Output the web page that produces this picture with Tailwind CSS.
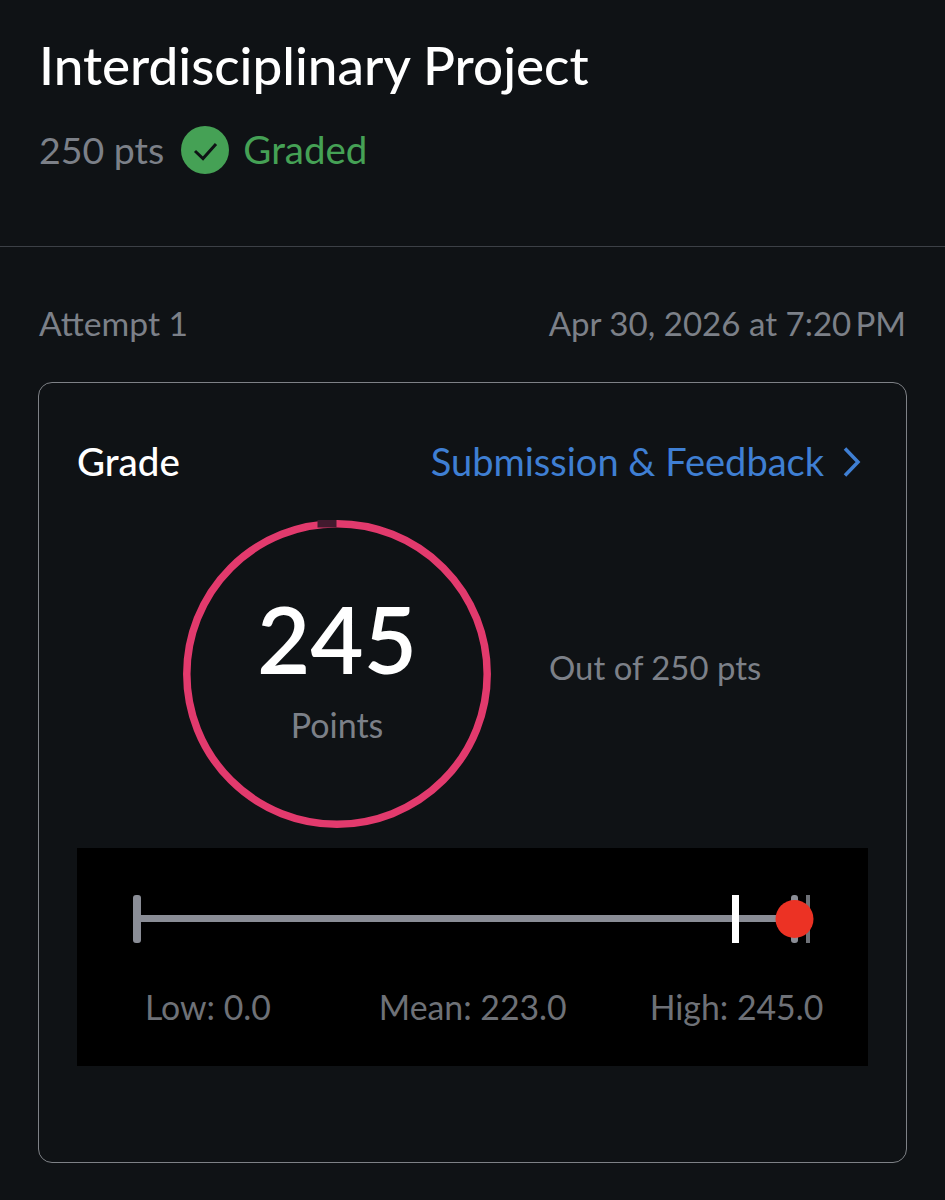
<!DOCTYPE html>
<html lang="en">
  <head>
    <meta charset="UTF-8" />
    <meta name="viewport" content="width=device-width, initial-scale=1.0" />
    <title>Interdisciplinary Project</title>
    <script src="https://cdn.jsdelivr.net/npm/@tailwindcss/browser@4"></script>
  </head>

  <body class="bg-[#0f1215] font-['Lato',sans-serif] w-[945px] h-[1200px] overflow-hidden">
    <!-- Header -->
    <div class="h-[247px] px-[39px] pt-[31px] border-b border-[#3c4046]">
      <h1 class="text-[53px] leading-[68px] font-medium text-white">Interdisciplinary Project</h1>
      <div class="flex items-center mt-[27px] h-[48px] text-[37.5px]">
        <span class="text-[#7c8088]">250 pts</span>
        <svg class="ml-[17px] mr-[14px]" width="48" height="48" viewBox="0 0 48 48">
          <circle cx="24" cy="24" r="24" fill="#45a155" />
          <path d="M14 25 L22 32.5 L35 18" fill="none" stroke="#0f1215" stroke-width="3" />
        </svg>
        <span class="text-[#45a155] text-[38.5px]">Graded</span>
      </div>
    </div>

    <!-- Attempt row -->
    <div class="flex justify-between items-center px-[39px] pt-[18px] h-[135px] text-[#7c8088]">
      <span class="text-[33.7px]">Attempt 1</span>
      <span class="text-[33.1px]">Apr 30, 2026 at 7:20&#8201;PM</span>
    </div>

    <!-- Grade card -->
    <div class="ml-[38px] w-[869px] h-[781px] border border-[#7e8186] rounded-[14px] px-[38px]">
      <div class="flex justify-between items-center pt-[57px] h-[100px] pr-[7px]">
        <span class="text-[38.5px] font-medium text-white">Grade</span>
        <span class="flex items-center text-[38px] text-[#3f7fd3]">
          Submission &amp; Feedback
          <svg class="ml-[19px]" width="18" height="30" viewBox="0 0 18 30">
            <path d="M2 1.5 L15 15 L2 28.5" fill="none" stroke="#3f7fd3" stroke-width="3.5" />
          </svg>
        </span>
      </div>

      <div class="flex items-start mt-[37px] pl-[106px]">
        <div class="relative w-[308px] h-[308px]">
          <svg class="absolute inset-0" width="308" height="308" viewBox="0 0 308 308">
            <circle cx="154" cy="154" r="150.2" fill="none" stroke="#e23a6d" stroke-width="7.5" />
            <rect x="134.5" y="0" width="19" height="7.5" fill="#421a2e" />
          </svg>
          <div class="relative flex flex-col items-center pt-[67px]">
            <span class="text-[92px] leading-[104px] font-semibold text-white">245</span>
            <span class="text-[34px] leading-[40px] mt-[14px] text-[#7c8088]">Points</span>
          </div>
        </div>
        <span class="ml-[58px] mt-[128px] text-[32.9px] leading-[40px] text-[#7c8088]">Out of 250 pts</span>
      </div>

      <!-- Score distribution -->
      <div class="mt-[20px] h-[218px] bg-black w-[791px]">
        <svg class="block" width="791" height="120" viewBox="0 0 791 120">
          <rect x="60" y="67" width="660" height="7" fill="#8a8d96" />
          <rect x="56" y="47" width="8" height="48" rx="3" fill="#8a8d96" />
          <rect x="714" y="47" width="7" height="48" rx="3" fill="#8a8d96" />
          <rect x="729" y="47" width="4" height="48" fill="#6e7177" />
          <rect x="655" y="47" width="7" height="48" fill="#ffffff" />
          <circle cx="717.5" cy="71" r="19" fill="#ec3224" />
        </svg>
        <div class="flex mt-[19px] text-[33.8px] leading-[40px] text-[#6e7177]">
          <span class="ml-[68px]">Low: 0.0</span>
          <span class="ml-[108px]">Mean: 223.0</span>
          <span class="ml-[83px]">High: 245.0</span>
        </div>
      </div>
    </div>
  </body>
</html>
